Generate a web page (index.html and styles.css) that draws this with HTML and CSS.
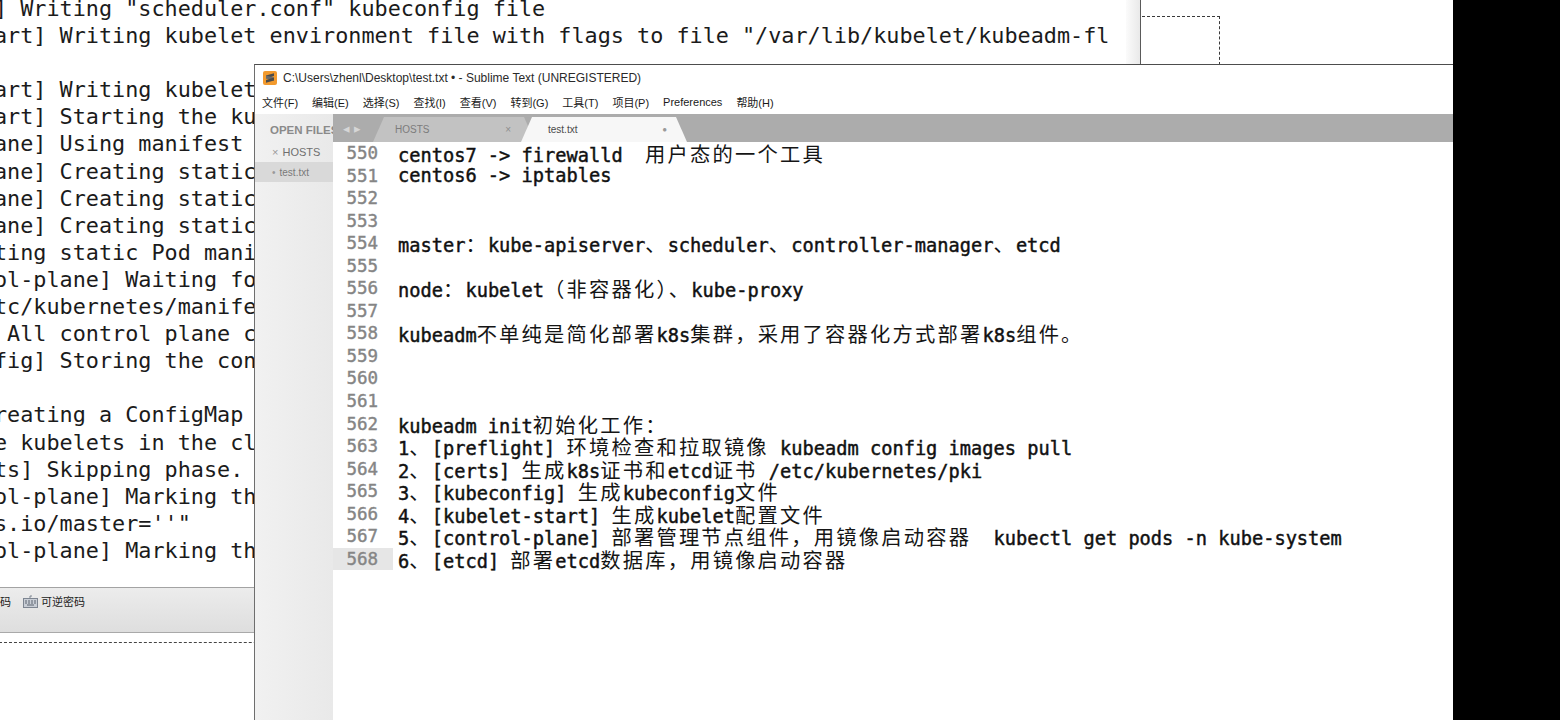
FILE: index.html
```html
<!DOCTYPE html>
<html lang="zh-CN">
<head>
    <meta charset="UTF-8">
    <title>test.txt - Sublime Text</title>
    <link rel="stylesheet" href="styles.css">
</head>
<body>
    <div class="desk">

        <!-- terminal window behind -->
        <div class="term">
            <div class="term-body">
                <div class="term-text">
                    <div class="tl">] Writing "scheduler.conf" kubeconfig file</div>
                    <div class="tl">art] Writing kubelet environment file with flags to file "/var/lib/kubelet/kubeadm-fl</div>
                    <div class="tl"></div>
                    <div class="tl">art] Writing kubelet</div>
                    <div class="tl">art] Starting the ku</div>
                    <div class="tl">ane] Using manifest</div>
                    <div class="tl">ane] Creating static</div>
                    <div class="tl">ane] Creating static</div>
                    <div class="tl">ane] Creating static</div>
                    <div class="tl">ting static Pod mani</div>
                    <div class="tl">ol-plane] Waiting fo</div>
                    <div class="tl">tc/kubernetes/manife</div>
                    <div class="tl"> All control plane c</div>
                    <div class="tl">fig] Storing the con</div>
                    <div class="tl"></div>
                    <div class="tl">reating a ConfigMap</div>
                    <div class="tl">e kubelets in the cl</div>
                    <div class="tl">ts] Skipping phase.</div>
                    <div class="tl">ol-plane] Marking th</div>
                    <div class="tl">s.io/master=''"</div>
                    <div class="tl">ol-plane] Marking th</div>
                </div>
                <div class="term-scroll"></div>
            </div>
            <div class="term-status">
                <span class="st-item">码</span>
                <span class="st-item">
                    <svg class="kbd" width="15" height="13" viewBox="0 0 15 13">
                        <rect x="0.5" y="3.5" width="14" height="9" fill="#c9ced6" stroke="#7d8591"/>
                        <path d="M7 3.5 V1 H9" fill="none" stroke="#7d8591"/>
                        <path d="M2 6h2M5 6h2M8 6h2M11 6h2M2 8h2M5 8h2M8 8h2M11 8h2M4 10h7" stroke="#5d6570"/>
                    </svg>
                    可逆密码
                </span>
            </div>
            <div class="term-dash"></div>
        </div>

        <div class="ghost-box"></div>

        <!-- sublime text window -->
        <div class="st">
            <div class="st-title">
                <svg class="st-logo" width="14" height="14" viewBox="0 0 14 14">
                    <rect width="14" height="14" rx="2" fill="#f29a2e"/>
                    <path d="M3 4.6 L11 2.2 V5 L3 7.4 Z" fill="#4b4b4b"/>
                    <path d="M3 7.4 L11 9.4 V6.6 L3 4.6 Z" fill="#6a6a6a"/>
                    <path d="M3 9 L11 6.6 V9.4 L3 11.8 Z" fill="#4b4b4b"/>
                </svg>
                <span>C:\Users\zhenl\Desktop\test.txt • - Sublime Text (UNREGISTERED)</span>
            </div>
            <div class="st-menu">
                <span>文件(F)</span>
                <span>编辑(E)</span>
                <span>选择(S)</span>
                <span>查找(I)</span>
                <span>查看(V)</span>
                <span>转到(G)</span>
                <span>工具(T)</span>
                <span>项目(P)</span>
                <span>Preferences</span>
                <span>帮助(H)</span>
            </div>
            <div class="st-main">
                <div class="sidebar">
                    <div class="sb-head">OPEN FILES</div>
                    <div class="sb-file"><span class="sb-mark">×</span> HOSTS</div>
                    <div class="sb-file sel"><span class="sb-mark">•</span> test.txt</div>
                </div>
                <div class="edit-col">
                    <div class="tabbar">
                        <span class="tab-arrows">◂ ▸</span>
                        <div class="tab">
                            <span class="tab-name">HOSTS</span>
                            <span class="tab-close">×</span>
                        </div>
                        <div class="tab active">
                            <span class="tab-name">test.txt</span>
                            <span class="tab-close">●</span>
                        </div>
                    </div>
                    <div class="editor">
                        <div class="row"><span class="num">550</span><span class="code">centos7 -&gt; firewalld  <span class="zh">用户态的一个工具</span></span></div>
                        <div class="row"><span class="num">551</span><span class="code">centos6 -&gt; iptables</span></div>
                        <div class="row"><span class="num">552</span><span class="code"></span></div>
                        <div class="row"><span class="num">553</span><span class="code"></span></div>
                        <div class="row"><span class="num">554</span><span class="code">master<span class="zh">：</span>kube-apiserver<span class="zh">、</span>scheduler<span class="zh">、</span>controller-manager<span class="zh">、</span>etcd</span></div>
                        <div class="row"><span class="num">555</span><span class="code"></span></div>
                        <div class="row"><span class="num">556</span><span class="code">node<span class="zh">：</span>kubelet<span class="zh">（非容器化）、</span>kube-proxy</span></div>
                        <div class="row"><span class="num">557</span><span class="code"></span></div>
                        <div class="row"><span class="num">558</span><span class="code">kubeadm<span class="zh">不单纯是简化部署</span>k8s<span class="zh">集群，采用了容器化方式部署</span>k8s<span class="zh">组件。</span></span></div>
                        <div class="row"><span class="num">559</span><span class="code"></span></div>
                        <div class="row"><span class="num">560</span><span class="code"></span></div>
                        <div class="row"><span class="num">561</span><span class="code"></span></div>
                        <div class="row"><span class="num">562</span><span class="code">kubeadm init<span class="zh">初始化工作：</span></span></div>
                        <div class="row"><span class="num">563</span><span class="code">1<span class="zh">、</span>[preflight] <span class="zh">环境检查和拉取镜像</span> kubeadm config images pull</span></div>
                        <div class="row"><span class="num">564</span><span class="code">2<span class="zh">、</span>[certs] <span class="zh">生成</span>k8s<span class="zh">证书和</span>etcd<span class="zh">证书</span> /etc/kubernetes/pki</span></div>
                        <div class="row"><span class="num">565</span><span class="code">3<span class="zh">、</span>[kubeconfig] <span class="zh">生成</span>kubeconfig<span class="zh">文件</span></span></div>
                        <div class="row"><span class="num">566</span><span class="code">4<span class="zh">、</span>[kubelet-start] <span class="zh">生成</span>kubelet<span class="zh">配置文件</span></span></div>
                        <div class="row"><span class="num">567</span><span class="code">5<span class="zh">、</span>[control-plane] <span class="zh">部署管理节点组件，用镜像启动容器</span>  kubectl get pods -n kube-system</span></div>
                        <div class="row cur"><span class="num">568</span><span class="code">6<span class="zh">、</span>[etcd] <span class="zh">部署</span>etcd<span class="zh">数据库，用镜像启动容器</span></span></div>
                    </div>
                </div>
            </div>
        </div>

        <div class="black-edge"></div>
    </div>
</body>
</html>
```

FILE: styles.css
```css
body {
    margin: 0;
    padding: 0;
    background-color: #ffffff;
    font-family: "Liberation Sans", "Noto Sans CJK SC", sans-serif;
}

.desk {
    position: relative;
    width: 1560px;
    height: 720px;
    overflow: hidden;
    background-color: #ffffff;
}

/* ---------- terminal (behind) ---------- */

.term {
    position: absolute;
    left: -6px;
    top: -5px;
    width: 1147px;
    height: 700px;
    display: flex;
    flex-direction: column;
    background-color: #ffffff;
}

.term-body {
    height: 592px;
    display: flex;
}

.term-text {
    flex: 1;
    overflow: hidden;
    font-family: "DejaVu Sans Mono", monospace;
    font-size: 21.8px;
    line-height: 27.1px;
    color: #1b1b1b;
}

.tl {
    height: 27.1px;
    white-space: pre;
}

.term-scroll {
    width: 14px;
    background: linear-gradient(to right, #fbfbfb, #e9e9e9);
    border-right: 1px solid #5a5a5a;
}

.term-status {
    height: 46px;
    display: flex;
    align-items: flex-start;
    gap: 12px;
    padding: 5px 0 0 6px;
    box-sizing: border-box;
    border-top: 1px solid #a3a3a3;
    border-bottom: 1px solid #a9a9a9;
    background: linear-gradient(#ececec, #dedede);
    font-family: "Noto Sans CJK SC", sans-serif;
    font-size: 11px;
    color: #222222;
}

.st-item {
    display: flex;
    align-items: center;
    gap: 3px;
}

.term-dash {
    margin-top: 9px;
    border-top: 1px dashed #444444;
}

.ghost-box {
    position: absolute;
    left: 1142px;
    top: 16px;
    width: 77px;
    height: 48px;
    border-top: 1px dashed #3a3a3a;
    border-right: 1px dashed #3a3a3a;
}

/* ---------- sublime window ---------- */

.st {
    position: absolute;
    left: 254px;
    top: 64px;
    width: 1199px;
    height: 660px;
    box-sizing: border-box;
    border-left: 1px solid #6e6e6e;
    border-top: 1px solid #4d4d4d;
    background-color: #ffffff;
    display: flex;
    flex-direction: column;
}

.st-title {
    height: 25px;
    display: flex;
    align-items: center;
    gap: 6px;
    padding-left: 8px;
    font-size: 12px;
    color: #2a2a2a;
}

.st-menu {
    height: 24px;
    display: flex;
    align-items: center;
    gap: 14px;
    padding-left: 7px;
    font-family: "Liberation Sans", "Noto Sans CJK SC", sans-serif;
    font-size: 11px;
    color: #1a1a1a;
}

.st-main {
    flex: 1;
    display: flex;
}

.sidebar {
    width: 78px;
    overflow: hidden;
    background: linear-gradient(to right, #f1f1f1, #e9e9e9);
}

.sb-head {
    height: 28px;
    padding: 10px 0 0 15px;
    box-sizing: border-box;
    font-size: 11.5px;
    font-weight: bold;
    color: #8a8a8a;
    white-space: nowrap;
}

.sb-file {
    height: 20px;
    display: flex;
    align-items: center;
    gap: 4px;
    padding-left: 17px;
    font-size: 11px;
    color: #6f6f6f;
}

.sb-file.sel {
    background-color: #d9d9d9;
    font-size: 10px;
    color: #7a7a7a;
}

.sb-mark {
    color: #9a9a9a;
}

.edit-col {
    flex: 1;
    display: flex;
    flex-direction: column;
}

.tabbar {
    height: 28px;
    display: flex;
    align-items: flex-end;
    background-color: #acacac;
    padding-left: 10px;
}

.tab-arrows {
    align-self: center;
    font-size: 13px;
    color: #d6d6d6;
    width: 30px;
}

.tab {
    width: 162px;
    height: 25px;
    display: flex;
    align-items: center;
    justify-content: space-between;
    padding: 0 24px 0 22px;
    box-sizing: border-box;
    background-color: #c2c2c2;
    clip-path: polygon(0 100%, 11px 0, calc(100% - 11px) 0, 100% 100%);
    font-size: 10px;
    color: #7c7c7c;
}

.tab.active {
    width: 166px;
    margin-left: -14px;
    padding-left: 27px;
    padding-right: 20px;
    background-color: #f7f7f7;
    color: #4a4a4a;
}

.tab-close {
    color: #8d8d8d;
    font-size: 10px;
}

.tab.active .tab-close {
    font-size: 8px;
    color: #9a9a9a;
}

.editor {
    flex: 1;
    background-color: #ffffff;
    font-family: "DejaVu Sans Mono", monospace;
    font-size: 18.67px;
}

.row {
    height: 22.56px;
    line-height: 22.56px;
    display: flex;
    white-space: pre;
}

.num {
    width: 60px;
    padding-right: 15px;
    box-sizing: border-box;
    text-align: right;
    color: #858585;
    font-size: 17.5px;
    -webkit-text-stroke: 0.4px #858585;
}

.row.cur .num {
    background-color: #e6e6e6;
}

.code {
    padding-left: 5px;
    color: #111111;
    -webkit-text-stroke: 0.45px #111111;
}

.zh {
    font-family: "Noto Sans CJK SC", sans-serif;
    font-weight: normal;
    font-size: 20.3px;
    letter-spacing: 2.2px;
    color: #151515;
    -webkit-text-stroke: 0;
}

.black-edge {
    position: absolute;
    left: 1453px;
    top: 0;
    width: 107px;
    height: 720px;
    background-color: #000000;
}
```
